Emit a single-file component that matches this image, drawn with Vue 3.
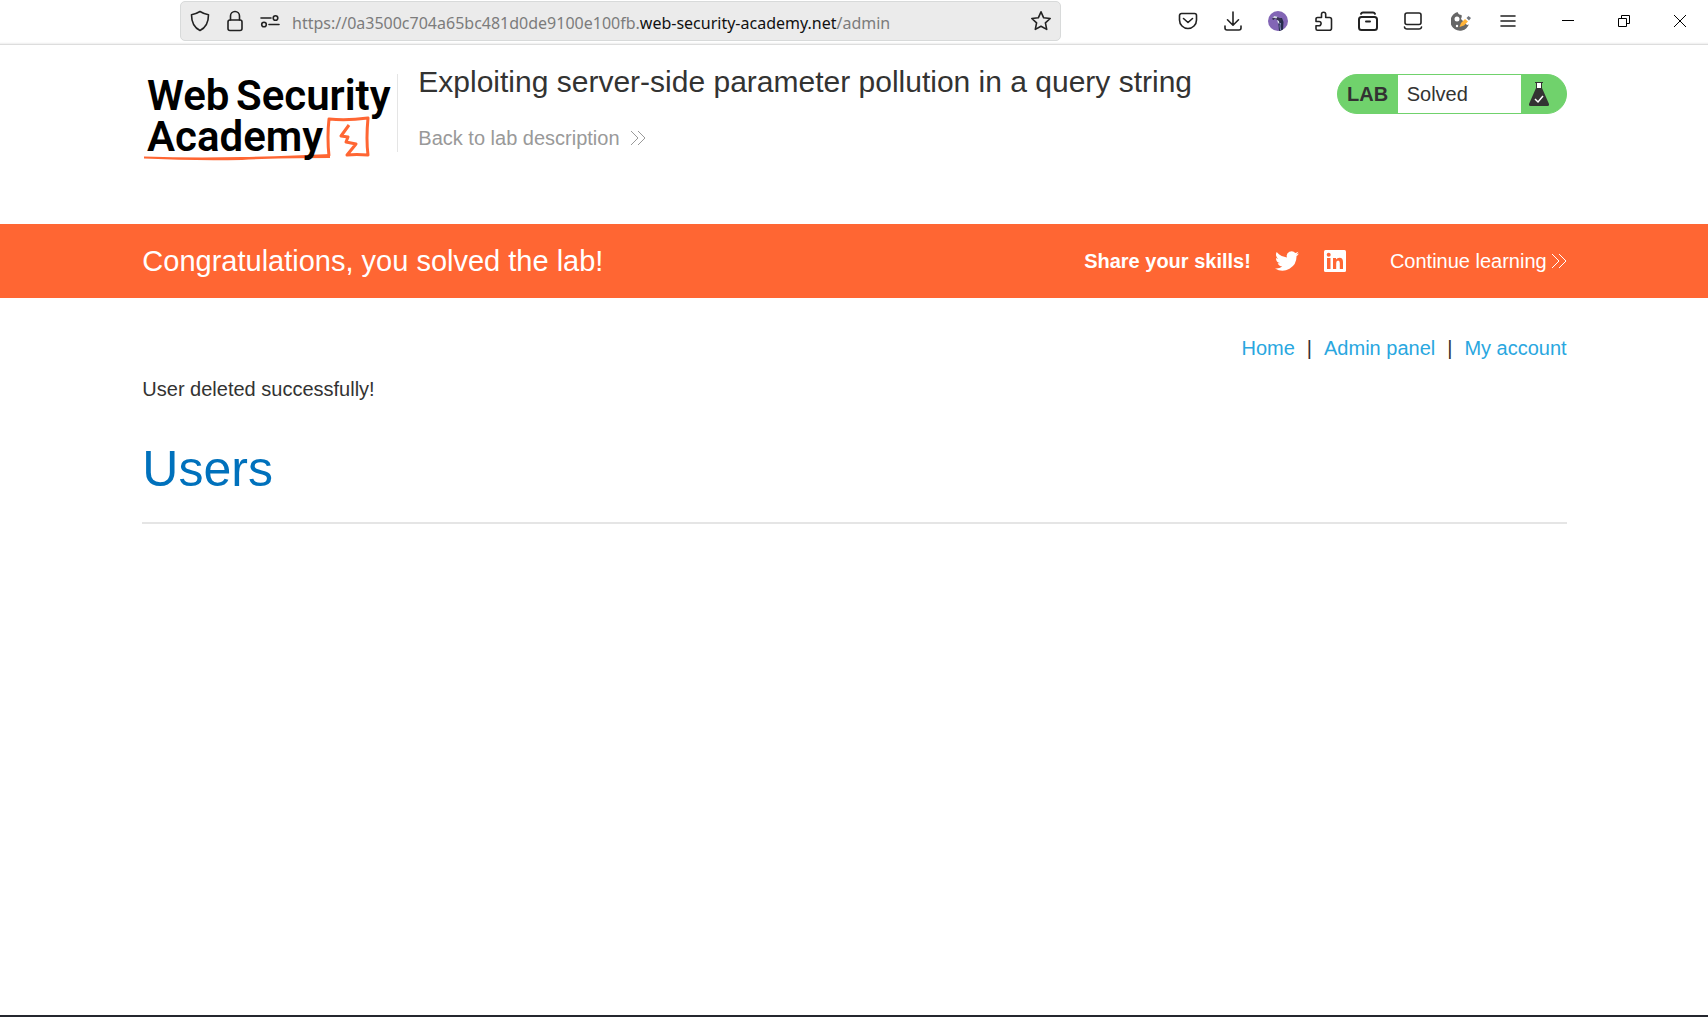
<script setup>
const navLinks = ['Home', 'Admin panel', 'My account']
</script>

<template>
  <div class="window">
    <div class="toolbar">
      <div class="address">
        <button class="tool" aria-label="Tracking protection">
          <svg width="20" height="22" viewBox="0 0 20 22"><path d="M10 1.500 Q14 4 18.500 4.700C18.500 11 16 17.500 10 20.500 4 17.500 1.500 11 1.500 4.700Q6 4 10 1.500Z" /></svg>
        </button>
        <button class="tool" aria-label="Site security">
          <svg width="18" height="22" viewBox="0 0 18 22"><rect x="2" y="10" width="14" height="10.500" rx="2" /><path d="M4.500 10V6a4.500 4.500 0 0 1 9 0v4" /></svg>
        </button>
        <button class="tool" aria-label="Permissions">
          <svg width="20" height="14" viewBox="0 0 20 14"><path d="M1 4h10M9 10.500h10" /><circle cx="15.500" cy="4" r="2.300" /><circle cx="4" cy="10.500" r="2.300" /></svg>
        </button>
        <div class="url" role="textbox" aria-label="Address">https://0a3500c704a65bc481d0de9100e100fb.<span class="host">web-security-academy.net</span>/admin</div>
        <button class="tool star" aria-label="Bookmark">
          <svg width="22" height="22" viewBox="0 0 22 22"><path d="m11 1.800 2.700 6 6.500.700-4.800 4.400 1.300 6.500-5.700-3.200-5.700 3.200 1.300-6.500L1.800 8.500l6.500-.700Z" /></svg>
        </button>
      </div>
      <div class="tools">
        <button aria-label="Pocket">
          <svg width="20" height="20" viewBox="0 0 20 20"><path d="M3.500 2.500h13a2 2 0 0 1 2 2V9a8.500 8.500 0 0 1-17 0V4.500a2 2 0 0 1 2-2Z" /><path d="m5.500 7.500 4.500 4 4.500-4" /></svg>
        </button>
        <button aria-label="Downloads">
          <svg width="20" height="20" viewBox="0 0 20 20"><path d="M10 1v13M4.500 8.800l5.500 5.400 5.500-5.400M2 15v2a2 2 0 0 0 2 2h12a2 2 0 0 0 2-2v-2" /></svg>
        </button>
        <button aria-label="Profile">
          <svg class="filled" width="20" height="20" viewBox="0 0 20 20">
            <circle cx="10" cy="10" r="10" fill="#8265b5" />
            <path d="M10 7h4l1.500 4-.500 7.500a10 10 0 0 1-4 1.500l-.500-6Z" fill="#252b4c" />
            <path d="M4 8 6 5.500l3 .500 4.500 1.500-.500 3-3-1-3-2-1.500 1.500Z" fill="#36324f" />
            <path d="m4.500 6.500 2-1.500 3 .700-1 1.800-2-.500ZM9 9l2 1 .500 3-1.500-1Z" fill="#d6dce8" />
            <path d="m12.500 12-.500 3 .500 4" stroke="#8590bf" fill="none" />
          </svg>
        </button>
        <button aria-label="Extensions">
          <svg width="20" height="20" viewBox="0 0 20 20"><path d="M4.500 6.500h4V3.300a2.100 2.100 0 0 1 4.200 0v3.200h3.800a2 2 0 0 1 2 2v8.700a2 2 0 0 1-2 2h-12a1.500 1.500 0 0 1-1.500-1.500v-3h3a2 2 0 0 0 0-4.200H3V8a1.500 1.500 0 0 1 1.500-1.500Z" /></svg>
        </button>
        <button aria-label="Archive">
          <svg class="bold" width="20" height="20" viewBox="0 0 20 20"><rect x="1" y="6" width="18" height="13" rx="2.500" /><path d="M3 2.800Q3.500 1.500 5 1.500h10q1.500 0 2 1.300M8 10.500h4" /></svg>
        </button>
        <button aria-label="Sidebar">
          <svg width="20" height="20" viewBox="0 0 20 20"><rect x="2" y="2" width="16" height="11.500" rx="2" /><path d="M1.500 16q.300 2 2.500 2h12q2.200 0 2.500-2" /></svg>
        </button>
      </div>
      <div class="tools wide">
        <button aria-label="Cookie editor">
          <svg class="filled" width="20" height="20" viewBox="0 0 20 20">
            <path d="M6.500 1q1 3 4 3 0 4 7.500 9a9.500 9.500 0 1 1-11.500-12Z" fill="#666" />
            <circle cx="6" cy="8" r="2.500" fill="#fff" /><circle cx="6" cy="15" r="1.200" fill="#fff" />
            <path d="M11 5h4l5 8-4 1-6-6Z" fill="#fff" />
            <path d="m8.500 16 1.500-4 4-4 3 2.500-4 4Z" fill="#ffb338" />
            <path d="m15.500 7 2-2 2.500 2-2 2.500Z" fill="#70757d" />
          </svg>
        </button>
        <button aria-label="Menu">
          <svg width="16" height="14" viewBox="0 0 16 14"><path d="M1 2h14M1 7h14M1 12h14" /></svg>
        </button>
      </div>
      <div class="tools system">
        <button aria-label="Minimize">
          <svg width="14" height="14" viewBox="0 0 14 14"><path d="M1 6.500h12" /></svg>
        </button>
        <button aria-label="Restore">
          <svg width="14" height="14" viewBox="0 0 14 14"><path d="M1.500 4.500h8v8h-8zM4.500 4.500v-3h8v8h-3" /></svg>
        </button>
        <button aria-label="Close">
          <svg width="14" height="14" viewBox="0 0 14 14"><path d="m1 1 12 12M13 1 1 13" /></svg>
        </button>
      </div>
    </div>

    <header class="lab-header">
      <a class="logo" href="#" aria-label="Web Security Academy">
        <svg width="255" height="96" viewBox="0 0 255 96">
          <path d="M2 89.500Q50 91 100 90T188 87V91Q130 91 100 93 50 94 2 91.500Z" fill="#ff6633" />
          <path class="ink" d="M187 89Q185 70 187 52 204 54 226 51 224 72 226 88 214 87 205 88 210 82 214 77L204 75 206 70 199 69 207 58" />
          <text x="5" y="43">Web</text>
          <text x="94" y="43">Security</text>
          <text x="5" y="84">Academy</text>
        </svg>
      </a>
      <span class="divider"></span>
      <div class="title">
        <h2>Exploiting server-side parameter pollution in a query string</h2>
        <a class="back" href="#">Back to lab description
          <svg class="chevrons" width="16" height="16" viewBox="0 0 16 16"><path d="m1 1 7 7-7 7M8 1l7 7-7 7" /></svg>
        </a>
      </div>
      <div class="status">
        <span class="tag">LAB</span>
        <span class="state">Solved</span>
        <svg class="flask" width="20" height="26" viewBox="0 0 20 26">
          <path d="M6 1h8v1h-1v5l7 16q.500 2-1.500 2h-17Q-.500 25 0 23L7 7V2H6Z" fill="#333332" />
          <path d="M8 2h4v5H8Z" fill="#fff" /><path d="m6 18 3 3 5-6" fill="none" stroke="#fff" stroke-width="1.500" />
        </svg>
      </div>
    </header>

    <section class="banner">
      <h4>Congratulations, you solved the lab!</h4>
      <span class="share">Share your skills!</span>
      <a class="social" href="#" aria-label="Share on Twitter">
        <svg width="24" height="24" viewBox="0 0 24 24"><path d="M24 4.600a10 10 0 0 1-2.800.800 5 5 0 0 0 2.200-2.700 10 10 0 0 1-3.100 1.200 4.900 4.900 0 0 0-8.400 4.500A14 14 0 0 1 1.700 3.100a4.900 4.900 0 0 0 1.500 6.600 5 5 0 0 1-2.200-.600 4.900 4.900 0 0 0 3.900 4.900 5 5 0 0 1-2.200.100 4.900 4.900 0 0 0 4.600 3.400A10 10 0 0 1 0 19.500 14 14 0 0 0 21.500 7.100 10 10 0 0 0 24 4.600Z" fill="#fff" /></svg>
      </a>
      <a class="social" href="#" aria-label="Share on LinkedIn">
        <svg width="24" height="24" viewBox="0 0 24 24"><rect x="1" y="1" width="22" height="22" rx="1.500" fill="#fff" /><path d="M4 9h3.500v11H4zM10 9h3v1.500Q14.200 8.700 16.500 8.700 20 8.700 20 13v7h-3.200v-6q0-2.600-1.700-2.600-1.900 0-1.900 2.600v6H10z" fill="#f63" /><circle cx="5.700" cy="5.700" r="2" fill="#f63" /></svg>
      </a>
      <a class="continue" href="#">Continue learning
        <svg class="chevrons" width="16" height="16" viewBox="0 0 16 16"><path d="m1 1 7 7-7 7M8 1l7 7-7 7" /></svg>
      </a>
    </section>

    <main>
      <nav>
        <template v-for="(link, i) in navLinks" :key="link">
          <span v-if="i">|</span>
          <a href="#">{{ link }}</a>
        </template>
      </nav>
      <p>User deleted successfully!</p>
      <h1>Users</h1>
      <hr />
    </main>
  </div>
</template>

<style>
body {
  margin: 0;
  background: #fff;
}
</style>

<style scoped>
.window {
  display: flex;
  flex-direction: column;
  box-sizing: border-box;
  min-height: 100vh;
  border-bottom: 2px solid #24262e;
  color: #333332;
  font: 20px/24px "Liberation Sans", Arial, sans-serif;
}
a {
  color: inherit;
  text-decoration: none;
}
svg {
  display: block;
  flex: none;
}
h1, h2, h4, p {
  margin: 0;
  font-weight: 400;
}
button {
  display: flex;
  align-items: center;
  justify-content: center;
  padding: 0;
  border: 0;
  background: none;
}
button svg:not(.filled) {
  fill: none;
  stroke: #222;
  stroke-width: 1.6;
  stroke-linecap: round;
  stroke-linejoin: round;
}
button svg.bold {
  stroke-width: 2;
}

.toolbar {
  display: flex;
  height: 44px;
  border-bottom: 1px solid #ddd;
  box-shadow: inset 0 -3px 2px -2px #eee;
}
.address {
  display: flex;
  flex: 1;
  align-items: center;
  box-sizing: border-box;
  height: 40px;
  margin: 1px 104px 0 180px;
  padding: 0 8px 0 1px;
  border: 1px solid #d8dada;
  border-radius: 5px;
  background: #ebebeb;
}
.tool {
  width: 35px;
  height: 32px;
}
.star {
  width: 22px;
}
.url {
  flex: 1;
  margin: 3px 0 0 5px;
  color: #7c7c7c;
  font: 16px/24px "Noto Sans", sans-serif;
  white-space: nowrap;
}
.host {
  color: #111;
}
.tools {
  display: flex;
  align-items: center;
  height: 42px;
  margin-right: 2px;
}
.tools button {
  width: 45px;
  height: 42px;
}
.wide {
  margin-right: 9px;
}
.wide button {
  width: 47px;
}
.system {
  margin-right: 0;
}
.system button {
  width: 56px;
}
.tools.system svg {
  stroke: #000;
  stroke-width: 1;
  stroke-linecap: butt;
}

.lab-header,
.banner,
main {
  padding: 0 calc(100% / 12 - 1px) 0 calc(100% / 12);
}
.lab-header {
  display: flex;
  align-items: flex-start;
  box-sizing: border-box;
  min-height: 179px;
  padding-top: 19px;
}
.logo {
  margin-top: 3px;
}
.logo text {
  fill: #000;
  font: 600 42px Roboto, sans-serif;
}
.ink {
  fill: none;
  stroke: #f63;
  stroke-width: 3;
  stroke-linejoin: round;
}
.divider {
  width: 1px;
  height: 78px;
  margin-top: 10px;
  background: #e5e5e5;
}
.title {
  flex: 1;
  margin-left: 20px;
}
.title h2 {
  font-size: 30px;
  line-height: 36px;
}
.back {
  display: flex;
  gap: 10px;
  align-items: center;
  margin-top: 26px;
  color: #999;
}
.chevrons {
  fill: none;
  stroke: currentColor;
}
.status {
  display: flex;
  align-items: center;
  box-sizing: border-box;
  width: 230px;
  height: 40px;
  margin-top: 10px;
  border: 1px solid #70d26c;
  border-radius: 20px;
  background: #70d26c;
}
.tag {
  width: 60px;
  font-weight: 700;
  text-align: center;
}
.state {
  flex: 1;
  padding: 7px 9px;
  background: #fff;
}
.flask {
  margin: 0 17px 0 8px;
}

.banner {
  display: flex;
  align-items: center;
  height: 74px;
  background: #f63;
  color: #fff;
}
.banner h4 {
  flex: 1;
  font-size: 29px;
  line-height: 36px;
}
.share {
  font-weight: 700;
}
.social {
  margin-left: 24px;
}
.continue {
  display: flex;
  gap: 4px;
  align-items: center;
  margin-left: 43px;
}

main {
  padding-top: 38px;
}
nav {
  display: flex;
  gap: 12px;
  justify-content: flex-end;
}
nav a {
  color: #29a7df;
}
p {
  margin-top: 17px;
}
h1 {
  margin-top: 38px;
  color: #0071bc;
  font-size: 50px;
  line-height: 60px;
}
hr {
  height: 2px;
  margin: 23px 0 0;
  border: 0;
  background: #e5e5e5;
}
</style>
